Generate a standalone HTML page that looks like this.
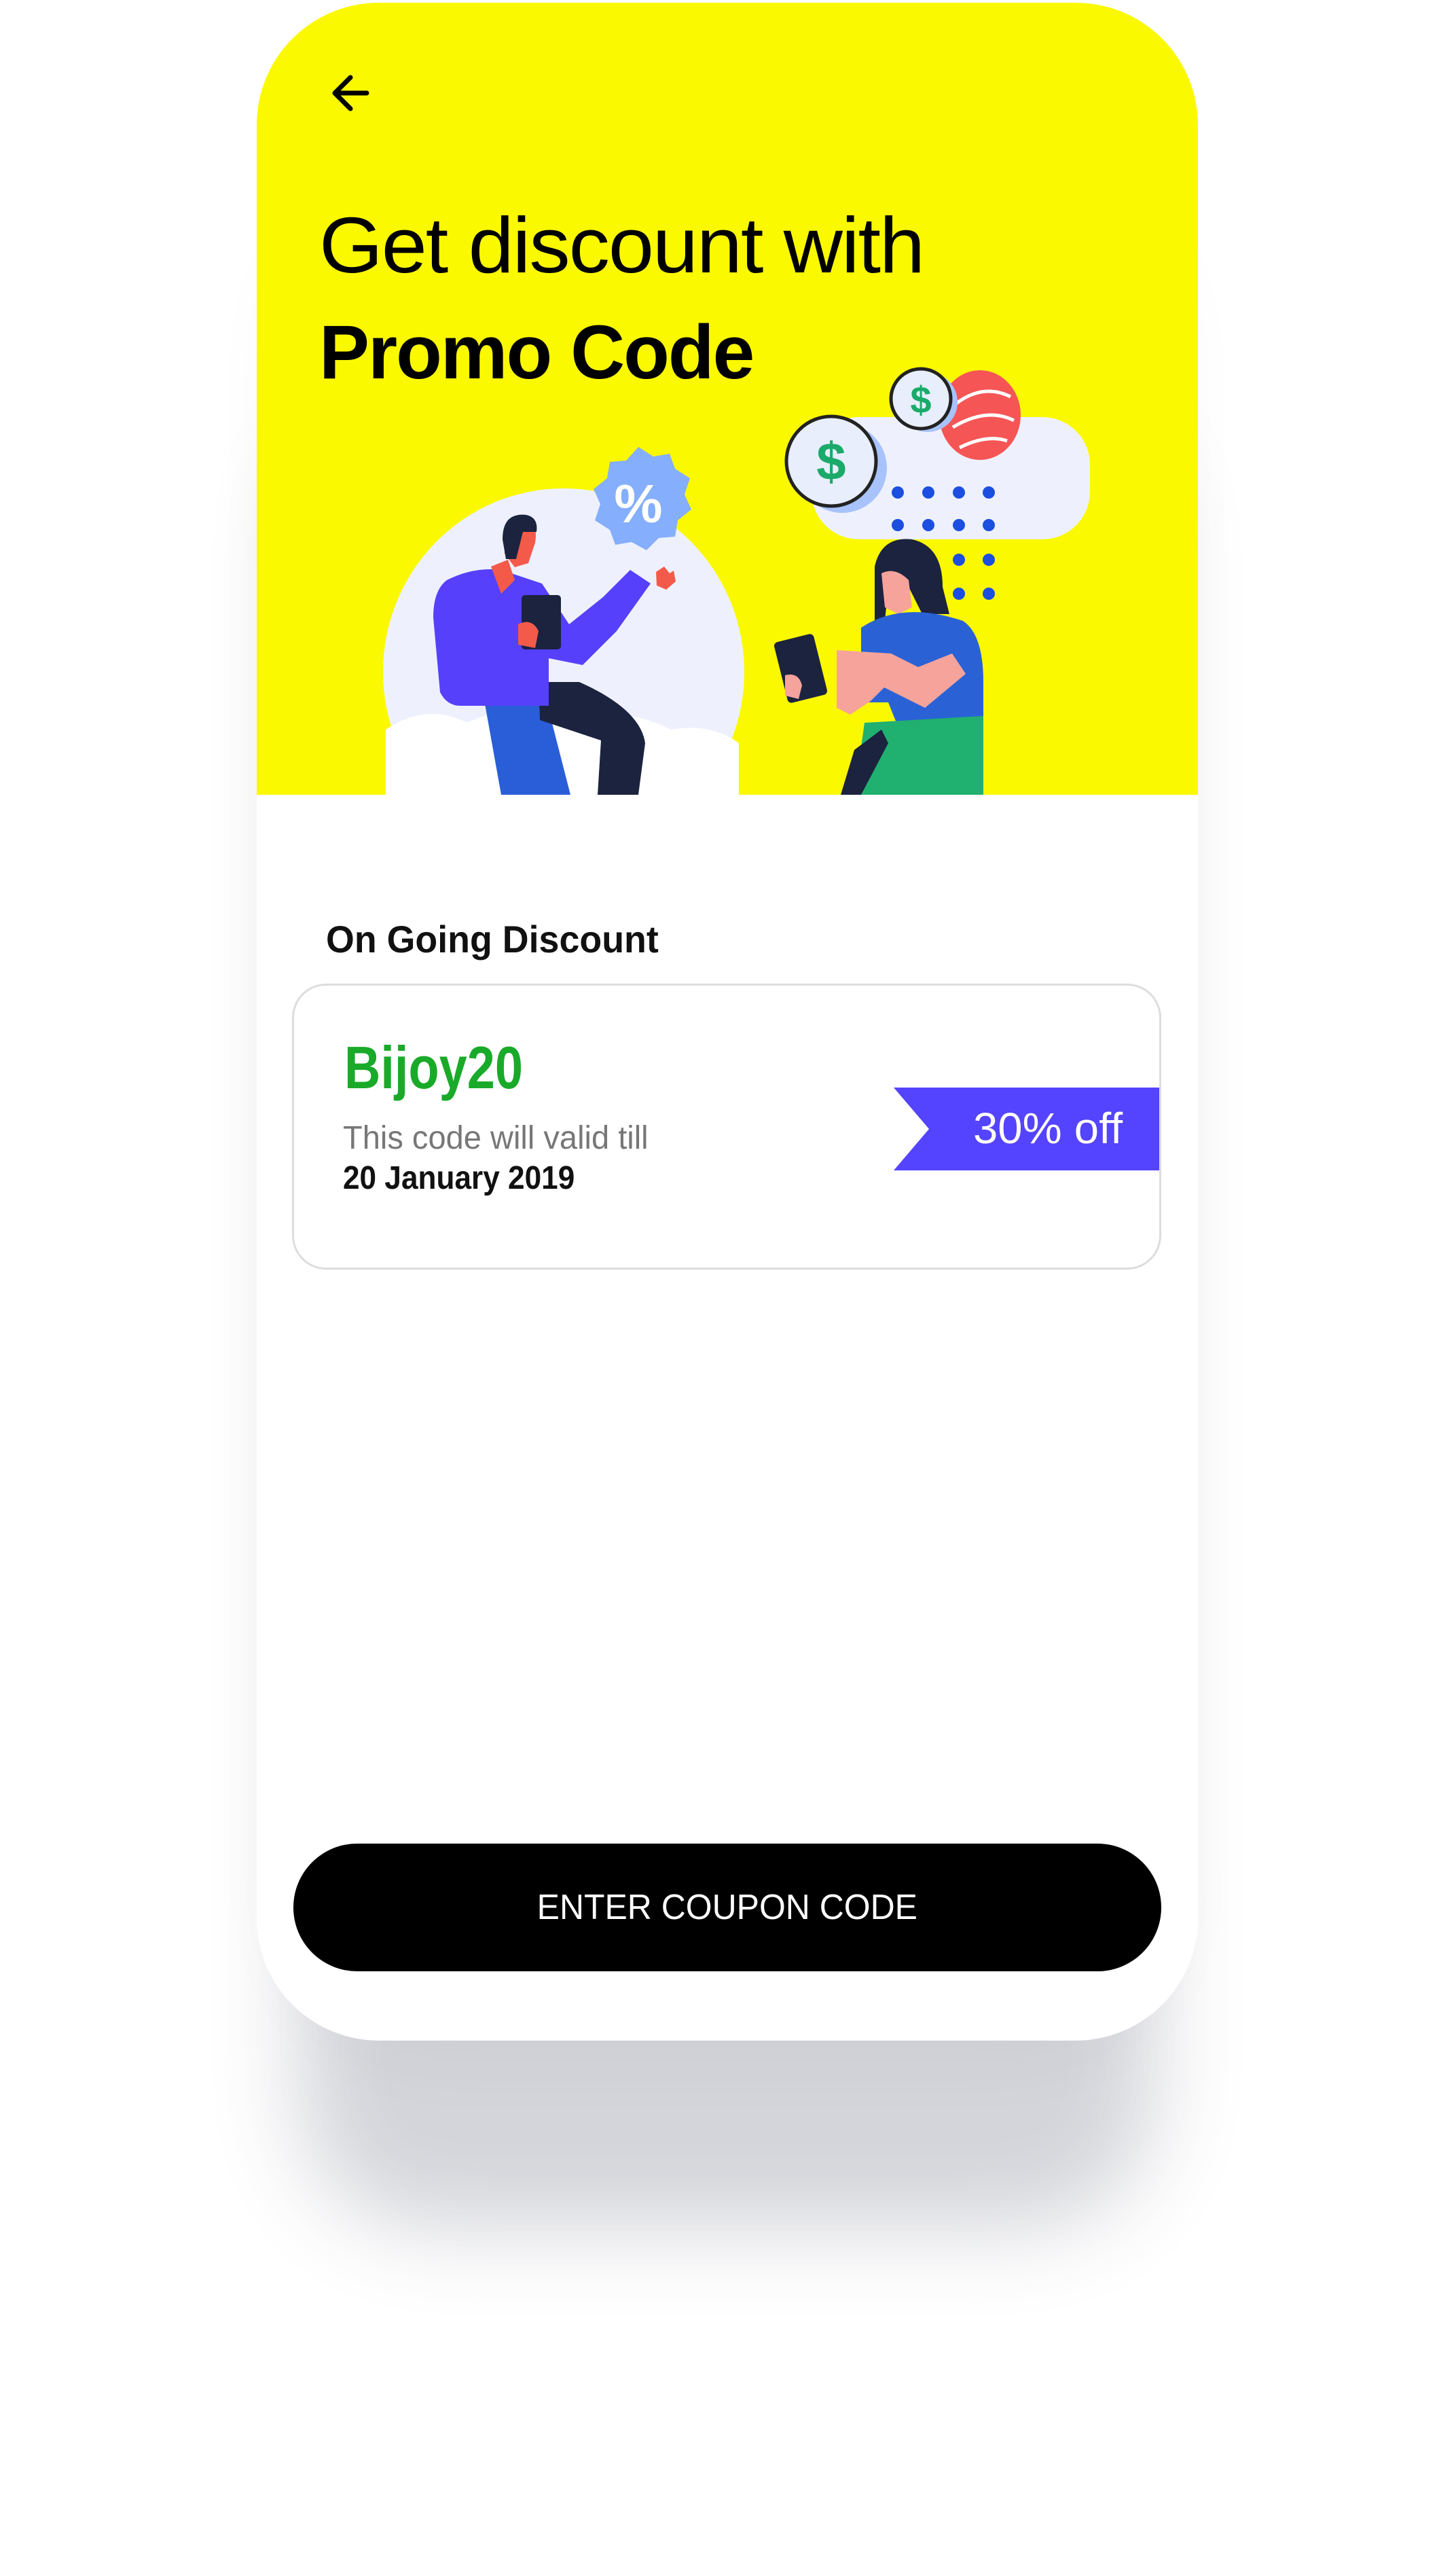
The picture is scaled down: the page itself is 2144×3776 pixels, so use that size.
<!DOCTYPE html>
<html><head><meta charset="utf-8"><style>
html,body{margin:0;padding:0;background:#fff;}
body{width:2144px;height:3776px;position:relative;overflow:hidden;font-family:"Liberation Sans",sans-serif;}
.shadow{position:absolute;left:440px;top:300px;width:1260px;height:2700px;border-radius:200px;box-shadow:0 280px 300px rgba(60,65,85,0.22),0 0 400px rgba(60,65,85,0.08);background:#eee;}
.phone{position:absolute;left:378px;top:4px;width:1386px;height:3000px;border-radius:180px;background:#fff;overflow:hidden;}
.yellow{position:absolute;left:0;top:0;width:100%;height:1166px;background:#fbf900;overflow:hidden;}
.t1{position:absolute;left:92px;top:290px;font-size:116px;color:#000;letter-spacing:-2px;white-space:nowrap;transform:scaleX(1.04);transform-origin:left;}
.t2{position:absolute;left:92px;top:450px;font-size:112px;font-weight:bold;color:#000;letter-spacing:-2px;white-space:nowrap;transform:scaleX(0.99);transform-origin:left;}
.abs{position:absolute;white-space:nowrap;}
</style></head><body>
<div class="shadow"></div>
<div class="phone">
 <div class="yellow">
  <svg class="abs" style="left:104px;top:98px" width="70" height="70" viewBox="0 0 70 70"><path d="M58 35H12M34 12L11 35l23 23" fill="none" stroke="#000" stroke-width="7" stroke-linecap="round" stroke-linejoin="round"/></svg>
  <div class="t1">Get discount with</div>
  <div class="t2">Promo Code</div>
  <svg class="abs" style="left:0;top:0" width="1386" height="1166" viewBox="0 0 1386 1166">
   <ellipse cx="452" cy="985" rx="266" ry="270" fill="#eef1fd"/>
   <path d="M190 1070q60-40 120-10q60-30 140 0q80-30 160 10q60-10 100 20v76H190z" fill="#fff"/>
   <path d="M562 654l22 14 24-4 8 22 22 14-8 24 10 22-20 16-4 24-24 2-18 18-22-12-24 4-8-22-22-14 8-24-10-22 20-16 4-24 24-2z" fill="#85aefc"/>
   <text x="562" y="765" font-size="80" font-weight="bold" fill="#fff" text-anchor="middle" font-family="Liberation Sans">%</text>
   <rect x="817" y="610" width="410" height="180" rx="70" fill="#eef1fd"/>
   <ellipse cx="1065" cy="607" rx="60" ry="66" fill="#f65555"/>
   <path d="M1030 590q40-30 80-10M1025 625q50-30 90-10M1035 655q40-20 70-10" stroke="#fff" stroke-width="5" fill="none"/>
   <circle cx="988" cy="588" r="44" fill="#a8c3fb"/>
   <circle cx="978" cy="583" r="44" fill="#e8eefb" stroke="#222" stroke-width="5"/>
   <text x="978" y="604" font-size="56" font-weight="bold" fill="#1aaa6a" text-anchor="middle" font-family="Liberation Sans">$</text>
   <circle cx="862" cy="685" r="66" fill="#a8c3fb"/>
   <circle cx="846" cy="675" r="66" fill="#e8eefb" stroke="#222" stroke-width="5"/>
   <text x="846" y="702" font-size="78" font-weight="bold" fill="#1aaa6a" text-anchor="middle" font-family="Liberation Sans">$</text>
   <g fill="#1c4ee0"><circle cx="944" cy="721" r="9"/><circle cx="989" cy="721" r="9"/><circle cx="1034" cy="721" r="9"/><circle cx="1078" cy="721" r="9"/><circle cx="944" cy="769" r="9"/><circle cx="989" cy="769" r="9"/><circle cx="1034" cy="769" r="9"/><circle cx="1078" cy="769" r="9"/><circle cx="1034" cy="820" r="9"/><circle cx="1078" cy="820" r="9"/><circle cx="1034" cy="870" r="9"/><circle cx="1078" cy="870" r="9"/></g>
   <path d="M332 1010h90l40 156H360z" fill="#2a5ed8"/>
   <path d="M415 1000h60q90 40 97 90l-10 76h-60l5-80-90-30z" fill="#1b233f"/>
   <path d="M280 850q40-20 80-15l60 20 40 60 50-40 40-40 30 20-50 70-50 50-50-10v70H300q-20 0-30-20l-10-110q0-40 20-55z" fill="#5640fb"/>
   <path d="M345 830l25-10 10 30-20 20z" fill="#f35a4a"/>
   <path d="M365 785q5-35 30-30 20 10 15 40l-10 30-20 6-15-20z" fill="#f35a4a"/>
   <path d="M362 790q0-40 35-36 18 4 15 25l-20 0-10 40-15 0z" fill="#1b233f"/>
   <rect x="390" y="872" width="58" height="80" rx="5" fill="#1b233f"/>
   <path d="M385 915q20-10 30 10l-5 25-25-5z" fill="#f35a4a"/>
   <path d="M588 838l12-8 8 10 6-4 3 16-14 12-14-6z" fill="#f35a4a"/>
   <path d="M910 830q10-45 55-40 45 10 45 70l10 40-40 0-20-40-30 0-5 50-15 0z" fill="#1b233f"/>
   <path d="M920 840q20-10 40 10l5 40-20 10-20-10z" fill="#f6a39b"/>
   <path d="M890 920q60-40 150-10 30 20 30 90l0 70-120 10-20-50-40 0z" fill="#2a62d6"/>
   <path d="M895 1060l175-10v116H880z" fill="#20b070"/>
   <path d="M880 1100l40-30 10 20-40 76h-30z" fill="#1b233f"/>
   <path d="M854 953l80 5 40 20 50-20 20 30-60 50-60-30-20 20-30 20-20-10 0-30z" fill="#f6a39b"/>
   <rect x="771" y="934" width="60" height="92" rx="6" transform="rotate(-14 801 980)" fill="#1b233f"/>
   <path d="M778 990q20-5 25 15l-5 20-20-5z" fill="#f6a39b"/>
  </svg>
 </div>
 <div class="abs" style="left:102px;top:1346px;font-size:56px;font-weight:bold;color:#111;transform:scaleX(0.96);transform-origin:left;">On Going Discount</div>
 <div class="abs" style="left:52px;top:1444px;width:1280px;height:421px;border:3px solid #ddd;border-radius:50px;box-sizing:border-box;background:#fff;overflow:hidden;">
  <div class="abs" style="left:74px;top:70px;font-size:88px;font-weight:bold;color:#1aaa2a;transform:scaleX(0.84);transform-origin:left;">Bijoy20</div>
  <div class="abs" style="left:72px;top:197px;font-size:48px;color:#777;transform:scaleX(0.98);transform-origin:left;">This code will valid till</div>
  <div class="abs" style="left:72px;top:256px;font-size:48px;font-weight:bold;color:#111;transform:scaleX(0.92);transform-origin:left;">20 January 2019</div>
  <svg class="abs" style="left:883px;top:150px" width="400" height="122" viewBox="0 0 400 122"><path d="M0 0H400V122H0L52 61z" fill="#5443ff"/></svg>
  <div class="abs" style="left:1000px;top:173px;font-size:64px;color:#fff;transform:scaleX(1.02);transform-origin:left;">30% off</div>
 </div>
 <div class="abs" style="left:54px;top:2710px;width:1278px;height:188px;border-radius:94px;background:#000;color:#fff;font-size:52px;line-height:188px;text-align:center;"><span style="display:inline-block;transform:scaleX(0.96);">ENTER COUPON CODE</span></div>
</div>
</body></html>
